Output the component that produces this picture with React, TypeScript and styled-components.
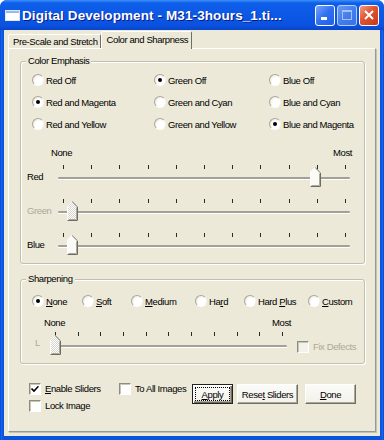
import React from 'react';
import styled, { createGlobalStyle, css } from 'styled-components';

const GlobalStyle = createGlobalStyle`
  html, body {
    margin: 0;
    padding: 0;
  }
  body {
    width: 384px;
    height: 440px;
    overflow: hidden;
    font-family: "Liberation Sans", Arial, sans-serif;
    font-size: 9.5px;
    letter-spacing: -0.4px;
    color: #000;
  }
`;

const Window = styled.div`
  width: 384px;
  height: 440px;
  box-sizing: border-box;
  display: flex;
  flex-direction: column;
  border-radius: 7px 7px 0 0;
  overflow: hidden;
  background: linear-gradient(
    90deg,
    #0831d9 0,
    #166aee 1px,
    #0855dd 3px,
    #0855dd calc(100% - 3px),
    #166aee calc(100% - 1px),
    #0831d9 100%
  );
`;

const TitleBar = styled.div`
  height: 30px;
  flex-shrink: 0;
  display: flex;
  align-items: center;
  gap: 2px;
  padding: 0 5px 0 5px;
  background: linear-gradient(
    180deg,
    #3d8ef9 0,
    #0e5fea 3px,
    #0c59e6 45%,
    #0a52df 85%,
    #0845c9 100%
  );
`;

const TitleIcon = styled.svg`
  flex-shrink: 0;
`;

const TitleText = styled.span`
  flex: 1;
  min-width: 0;
  white-space: nowrap;
  overflow: hidden;
  font-family: "Liberation Sans", Arial, sans-serif;
  font-weight: 700;
  font-size: 13.5px;
  letter-spacing: 0.1px;
  color: #fff;
  text-shadow: 1px 1px 0 #0a1883;
`;

const WinButton = styled.div<{ $variant: 'min' | 'max' | 'close' }>`
  width: 20px;
  height: 21px;
  flex-shrink: 0;
  box-sizing: border-box;
  border: 1px solid #fff;
  border-radius: 3px;
  display: flex;
  align-items: center;
  justify-content: center;
  background: ${({ $variant }) =>
    $variant === 'close'
      ? 'linear-gradient(135deg, #f39a7f 0, #e0522f 45%, #c7381a 100%)'
      : $variant === 'max'
      ? 'linear-gradient(135deg, #8fb4f6 0, #5c8ff0 50%, #4a7fe8 100%)'
      : 'linear-gradient(135deg, #7aa5fb 0, #2f6ff0 50%, #1f5fe6 100%)'};
  opacity: ${({ $variant }) => ($variant === 'max' ? 0.7 : 1)};
`;

const Client = styled.div`
  flex: 1;
  min-height: 0;
  margin: 0 4px 4px;
  padding: 1px 4px 4px;
  background: #ece9d8;
  display: flex;
  flex-direction: column;
`;

const TabRow = styled.div`
  display: flex;
  align-items: flex-end;
  height: 17px;
`;

const Tab = styled.div<{ $active?: boolean }>`
  position: relative;
  box-sizing: border-box;
  display: flex;
  align-items: center;
  height: ${({ $active }) => ($active ? 18 : 14)}px;
  padding: ${({ $active }) => ($active ? '0 3px 2px 5px' : '0 2px 0 4px')};
  margin-bottom: ${({ $active }) => ($active ? -1 : 0)}px;
  z-index: ${({ $active }) => ($active ? 1 : 0)};
  background: #ece9d8;
  border: 1px solid;
  border-bottom: none;
  border-color: #fff #716f64 transparent #fff;
  border-radius: 2px 2px 0 0;
  white-space: nowrap;
`;

const Panel = styled.div`
  flex: 1;
  box-sizing: border-box;
  border: 1px solid;
  border-color: #fff #919b9c #919b9c #fff;
  box-shadow: 1px 1px 0 #c5c2b2;
  padding: 12px 10px 0 11px;
  display: flex;
  flex-direction: column;
`;

const GroupBox = styled.div<{ $height: number; $top?: number }>`
  position: relative;
  box-sizing: border-box;
  height: ${({ $height }) => $height}px;
  margin-top: ${({ $top = 0 }) => $top}px;
  border: 1px solid #c2bfae;
  border-radius: 3px;
  box-shadow: 1px 1px 0 #fff, inset 1px 1px 0 #fff;
  display: flex;
  flex-direction: column;
`;

const Legend = styled.span`
  position: absolute;
  top: -7px;
  left: 5px;
  padding: 0 2px;
  line-height: 12px;
  background: #ece9d8;
`;

const RadioGrid = styled.div`
  display: grid;
  grid-template-columns: 122px 115px 1fr;
  grid-auto-rows: 22px;
  padding: 7px 0 0 11px;
`;

const RadioRow = styled.div`
  display: flex;
  height: 22px;
  padding: 10px 0 0 11px;
`;

const RadioItem = styled.label<{ $width?: number }>`
  display: flex;
  align-items: center;
  gap: 2px;
  white-space: nowrap;
  width: ${({ $width }) => ($width ? `${$width}px` : 'auto')};
`;

const RadioCircle = styled.span<{ $checked?: boolean }>`
  width: 12px;
  height: 12px;
  box-sizing: border-box;
  border-radius: 50%;
  flex-shrink: 0;
  display: inline-flex;
  align-items: center;
  justify-content: center;
  border: 1px solid;
  border-color: #aca899 #f6f5ef #fff #aca899;
  background: radial-gradient(circle at 65% 65%, #fff 45%, #dedbcd 100%);

  &::after {
    content: '';
    width: 4px;
    height: 4px;
    border-radius: 50%;
    background: #000;
    display: ${({ $checked }) => ($checked ? 'block' : 'none')};
  }
`;

const Key = styled.span`
  text-decoration: underline;
`;

const ScaleRow = styled.div<{ $top: number; $left: number; $width: number }>`
  display: flex;
  justify-content: space-between;
  line-height: 12px;
  margin: ${({ $top }) => $top}px 0 0 ${({ $left }) => $left}px;
  width: ${({ $width }) => $width}px;
`;

const SliderRow = styled.div<{ $height: number; $inset: number }>`
  display: flex;
  height: ${({ $height }) => $height}px;
  padding-left: ${({ $inset }) => $inset}px;
`;

const SliderLabel = styled.span<{ $width: number; $top: number; $disabled?: boolean }>`
  width: ${({ $width }) => $width}px;
  margin-top: ${({ $top }) => $top}px;
  line-height: 12px;
  height: 12px;
  color: ${({ $disabled }) => ($disabled ? '#aca899' : '#000')};
`;

const TrackArea = styled.div<{ $width: number }>`
  position: relative;
  width: ${({ $width }) => $width}px;
  display: flex;
  flex-direction: column;
`;

const TickRow = styled.div<{ $top: number }>`
  display: flex;
  justify-content: space-between;
  height: 4px;
  margin-top: ${({ $top }) => $top}px;
  padding: 0 4px 0 5px;
`;

const Tick = styled.span`
  width: 1px;
  height: 4px;
  background: #2a2a2a;
`;

const Channel = styled.div<{ $gap: number }>`
  margin-top: ${({ $gap }) => $gap}px;
  height: 2px;
  border-radius: 1px;
  background: #a3a197;
  box-shadow: 0 1px 0 #fff;
`;

const Thumb = styled.svg<{ $left: number; $top: number }>`
  position: absolute;
  left: ${({ $left }) => $left}px;
  top: ${({ $top }) => $top}px;
`;

const CheckItem = styled.label<{ $disabled?: boolean; $top?: number; $left?: number }>`
  display: flex;
  align-items: center;
  gap: 4px;
  height: 17px;
  white-space: nowrap;
  margin-top: ${({ $top = 0 }) => $top}px;
  margin-left: ${({ $left = 0 }) => $left}px;
  color: ${({ $disabled }) => ($disabled ? '#aca899' : '#000')};
`;

const CheckBox = styled.span<{ $disabled?: boolean }>`
  width: 12px;
  height: 12px;
  box-sizing: border-box;
  flex-shrink: 0;
  display: inline-flex;
  align-items: center;
  justify-content: center;
  border: 1px solid;
  border-color: #8e8c80 #fff #fff #8e8c80;
  box-shadow: inset 1px 1px 0 #c9c6b6;
  background: ${({ $disabled }) => ($disabled ? '#f2f1ea' : '#fff')};
`;

const Footer = styled.div`
  display: flex;
  align-items: flex-start;
  margin-top: 16px;
  padding: 0 9px 0 9px;
`;

const Checks = styled.div`
  display: grid;
  grid-template-columns: 90px auto;
`;

const Buttons = styled.div`
  margin-left: auto;
  margin-top: 4px;
  display: flex;
`;

const PushButton = styled.div<{ $width: number; $gap?: number; $default?: boolean }>`
  width: ${({ $width }) => $width}px;
  height: 20px;
  margin-left: ${({ $gap = 0 }) => $gap}px;
  box-sizing: border-box;
  display: flex;
  align-items: center;
  justify-content: center;
  white-space: nowrap;
  background: linear-gradient(180deg, #fbfbf8 0, #f2f1ea 100%);
  border: 1px solid;
  border-color: #fff #716f64 #716f64 #fff;
  box-shadow: inset -1px -1px 0 #aca899;
  ${({ $default }) =>
    $default &&
    css`
      border-color: #222;
      box-shadow: inset 1px 1px 0 #fff, inset -1px -1px 0 #716f64,
        inset -2px -2px 0 #aca899;
      padding: 2px;
    `}
`;

const FocusRing = styled.span`
  flex: 1;
  align-self: stretch;
  display: flex;
  align-items: center;
  justify-content: center;
  border: 1px dotted #000;
`;

const withKey = (label: string, index?: number) =>
  index === undefined ? (
    <span>{label}</span>
  ) : (
    <span>
      {label.slice(0, index)}
      <Key>{label[index]}</Key>
      {label.slice(index + 1)}
    </span>
  );

const Radio = ({
  label,
  checked,
  keyIndex,
  width,
}: {
  label: string;
  checked?: boolean;
  keyIndex?: number;
  width?: number;
}) => (
  <RadioItem $width={width}>
    <RadioCircle $checked={checked} />
    {withKey(label, keyIndex)}
  </RadioItem>
);

const Check = ({
  label,
  checked,
  disabled,
  keyIndex,
  top,
  left,
}: {
  label: string;
  checked?: boolean;
  disabled?: boolean;
  keyIndex?: number;
  top?: number;
  left?: number;
}) => (
  <CheckItem $disabled={disabled} $top={top} $left={left}>
    <CheckBox $disabled={disabled}>
      {checked && (
        <svg width="8" height="8" viewBox="0 0 8 8">
          <path d="M0.5 3.5 L3 6 L7.5 1.2" stroke="#000" strokeWidth="1.6" fill="none" />
        </svg>
      )}
    </CheckBox>
    {withKey(label, keyIndex)}
  </CheckItem>
);

const ThumbShape = ({ left, top, disabled }: { left: number; top: number; disabled?: boolean }) => (
  <Thumb $left={left} $top={top} width="11" height="20" viewBox="0 0 11 20">
    <defs>
      <pattern id="dither" width="2" height="2" patternUnits="userSpaceOnUse">
        <rect width="2" height="2" fill="#fff" />
        <rect width="1" height="1" fill="#d8d6cc" />
        <rect x="1" y="1" width="1" height="1" fill="#d8d6cc" />
      </pattern>
    </defs>
    <polygon points="0,5 5,0 11,6 11,20 0,20" fill={disabled ? 'url(#dither)' : '#fafaf6'} />
    <polyline points="0.5,19.5 0.5,5.3 5.3,0.5" stroke="#fff" fill="none" />
    <polyline points="5.2,0.6 10.5,5.9 10.5,19.5 0.5,19.5" stroke="#6f6d62" fill="none" />
    <polyline points="9.5,6.5 9.5,18.5 1.5,18.5" stroke="#aca899" fill="none" />
  </Thumb>
);

const Slider = ({
  width,
  thumb,
  tickTop,
  gap,
  thumbTop,
  disabled,
}: {
  width: number;
  thumb: number;
  tickTop: number;
  gap: number;
  thumbTop: number;
  disabled?: boolean;
}) => (
  <TrackArea $width={width}>
    <TickRow $top={tickTop}>
      {Array.from({ length: 11 }, (_, i) => (
        <Tick key={i} />
      ))}
    </TickRow>
    <Channel $gap={gap} />
    <ThumbShape left={thumb} top={thumbTop} disabled={disabled} />
  </TrackArea>
);

const colorOptions = [
  { label: 'Red Off' },
  { label: 'Green Off', checked: true },
  { label: 'Blue Off' },
  { label: 'Red and Magenta', checked: true },
  { label: 'Green and Cyan' },
  { label: 'Blue and Cyan' },
  { label: 'Red and Yellow' },
  { label: 'Green and Yellow' },
  { label: 'Blue and Magenta', checked: true },
];

const sharpenOptions = [
  { label: 'None', keyIndex: 0, width: 50, checked: true },
  { label: 'Soft', keyIndex: 0, width: 49 },
  { label: 'Medium', keyIndex: 0, width: 64 },
  { label: 'Hard', keyIndex: 2, width: 49 },
  { label: 'Hard Plus', keyIndex: 5, width: 64 },
  { label: 'Custom', keyIndex: 0 },
];

const colorSliders = [
  { label: 'Red', thumb: 252 },
  { label: 'Green', thumb: 9, disabled: true },
  { label: 'Blue', thumb: 9 },
];

const App: React.FC = () => (
  <>
    <GlobalStyle />
    <Window>
      <TitleBar>
        <TitleIcon width="15" height="14" viewBox="0 0 15 14">
          <rect x="0.5" y="2.5" width="14" height="10" fill="#fff" stroke="#dfe8fb" />
          <rect x="1" y="3" width="13" height="2" fill="#9bb8ee" />
        </TitleIcon>
        <TitleText>Digital Development - M31-3hours_1.ti...</TitleText>
        <WinButton $variant="min">
          <svg width="12" height="12" viewBox="0 0 12 12">
            <rect x="2" y="8" width="6" height="3" fill="#fff" />
          </svg>
        </WinButton>
        <WinButton $variant="max">
          <svg width="12" height="12" viewBox="0 0 12 12">
            <rect x="1.5" y="1.5" width="9" height="9" fill="none" stroke="#e6eefc" />
            <rect x="1" y="1" width="10" height="2" fill="#e6eefc" />
          </svg>
        </WinButton>
        <WinButton $variant="close">
          <svg width="12" height="12" viewBox="0 0 12 12">
            <path d="M2 2 L10 10 M10 2 L2 10" stroke="#fff" strokeWidth="2" />
          </svg>
        </WinButton>
      </TitleBar>
      <Client>
        <TabRow>
          <Tab>Pre-Scale and Stretch</Tab>
          <Tab $active>Color and Sharpness</Tab>
        </TabRow>
        <Panel>
          <GroupBox $height={203}>
            <Legend>Color Emphasis</Legend>
            <RadioGrid>
              {colorOptions.map((o) => (
                <Radio key={o.label} label={o.label} checked={o.checked} />
              ))}
            </RadioGrid>
            <ScaleRow $top={12} $left={30} $width={301}>
              <span>None</span>
              <span>Most</span>
            </ScaleRow>
            {colorSliders.map((s) => (
              <SliderRow key={s.label} $height={34} $inset={6}>
                <SliderLabel $width={31} $top={12} $disabled={s.disabled}>
                  {s.label}
                </SliderLabel>
                <Slider
                  width={292}
                  thumb={s.thumb}
                  tickTop={6}
                  gap={8}
                  thumbTop={8}
                  disabled={s.disabled}
                />
              </SliderRow>
            ))}
          </GroupBox>
          <GroupBox $height={85} $top={15}>
            <Legend>Sharpening</Legend>
            <RadioRow>
              {sharpenOptions.map((o) => (
                <Radio
                  key={o.label}
                  label={o.label}
                  keyIndex={o.keyIndex}
                  width={o.width}
                  checked={o.checked}
                />
              ))}
            </RadioRow>
            <ScaleRow $top={5} $left={23} $width={247}>
              <span>None</span>
              <span>Most</span>
            </ScaleRow>
            <SliderRow $height={33} $inset={14}>
              <SliderLabel $width={15} $top={8} $disabled>
                L
              </SliderLabel>
              <Slider width={237} thumb={0} tickTop={3} gap={9} thumbTop={6} disabled />
              <Check label="Fix Defects" disabled top={9} left={10} />
            </SliderRow>
          </GroupBox>
          <Footer>
            <Checks>
              <Check label="Enable Sliders" keyIndex={0} checked />
              <Check label="To All Images" />
              <Check label="Lock Image" />
            </Checks>
            <Buttons>
              <PushButton $width={41} $default>
                <FocusRing>{withKey('Apply', 0)}</FocusRing>
              </PushButton>
              <PushButton $width={61} $gap={4}>
                {withKey('Reset Sliders', 4)}
              </PushButton>
              <PushButton $width={51} $gap={7}>
                {withKey('Done', 0)}
              </PushButton>
            </Buttons>
          </Footer>
        </Panel>
      </Client>
    </Window>
  </>
);

export default App;
